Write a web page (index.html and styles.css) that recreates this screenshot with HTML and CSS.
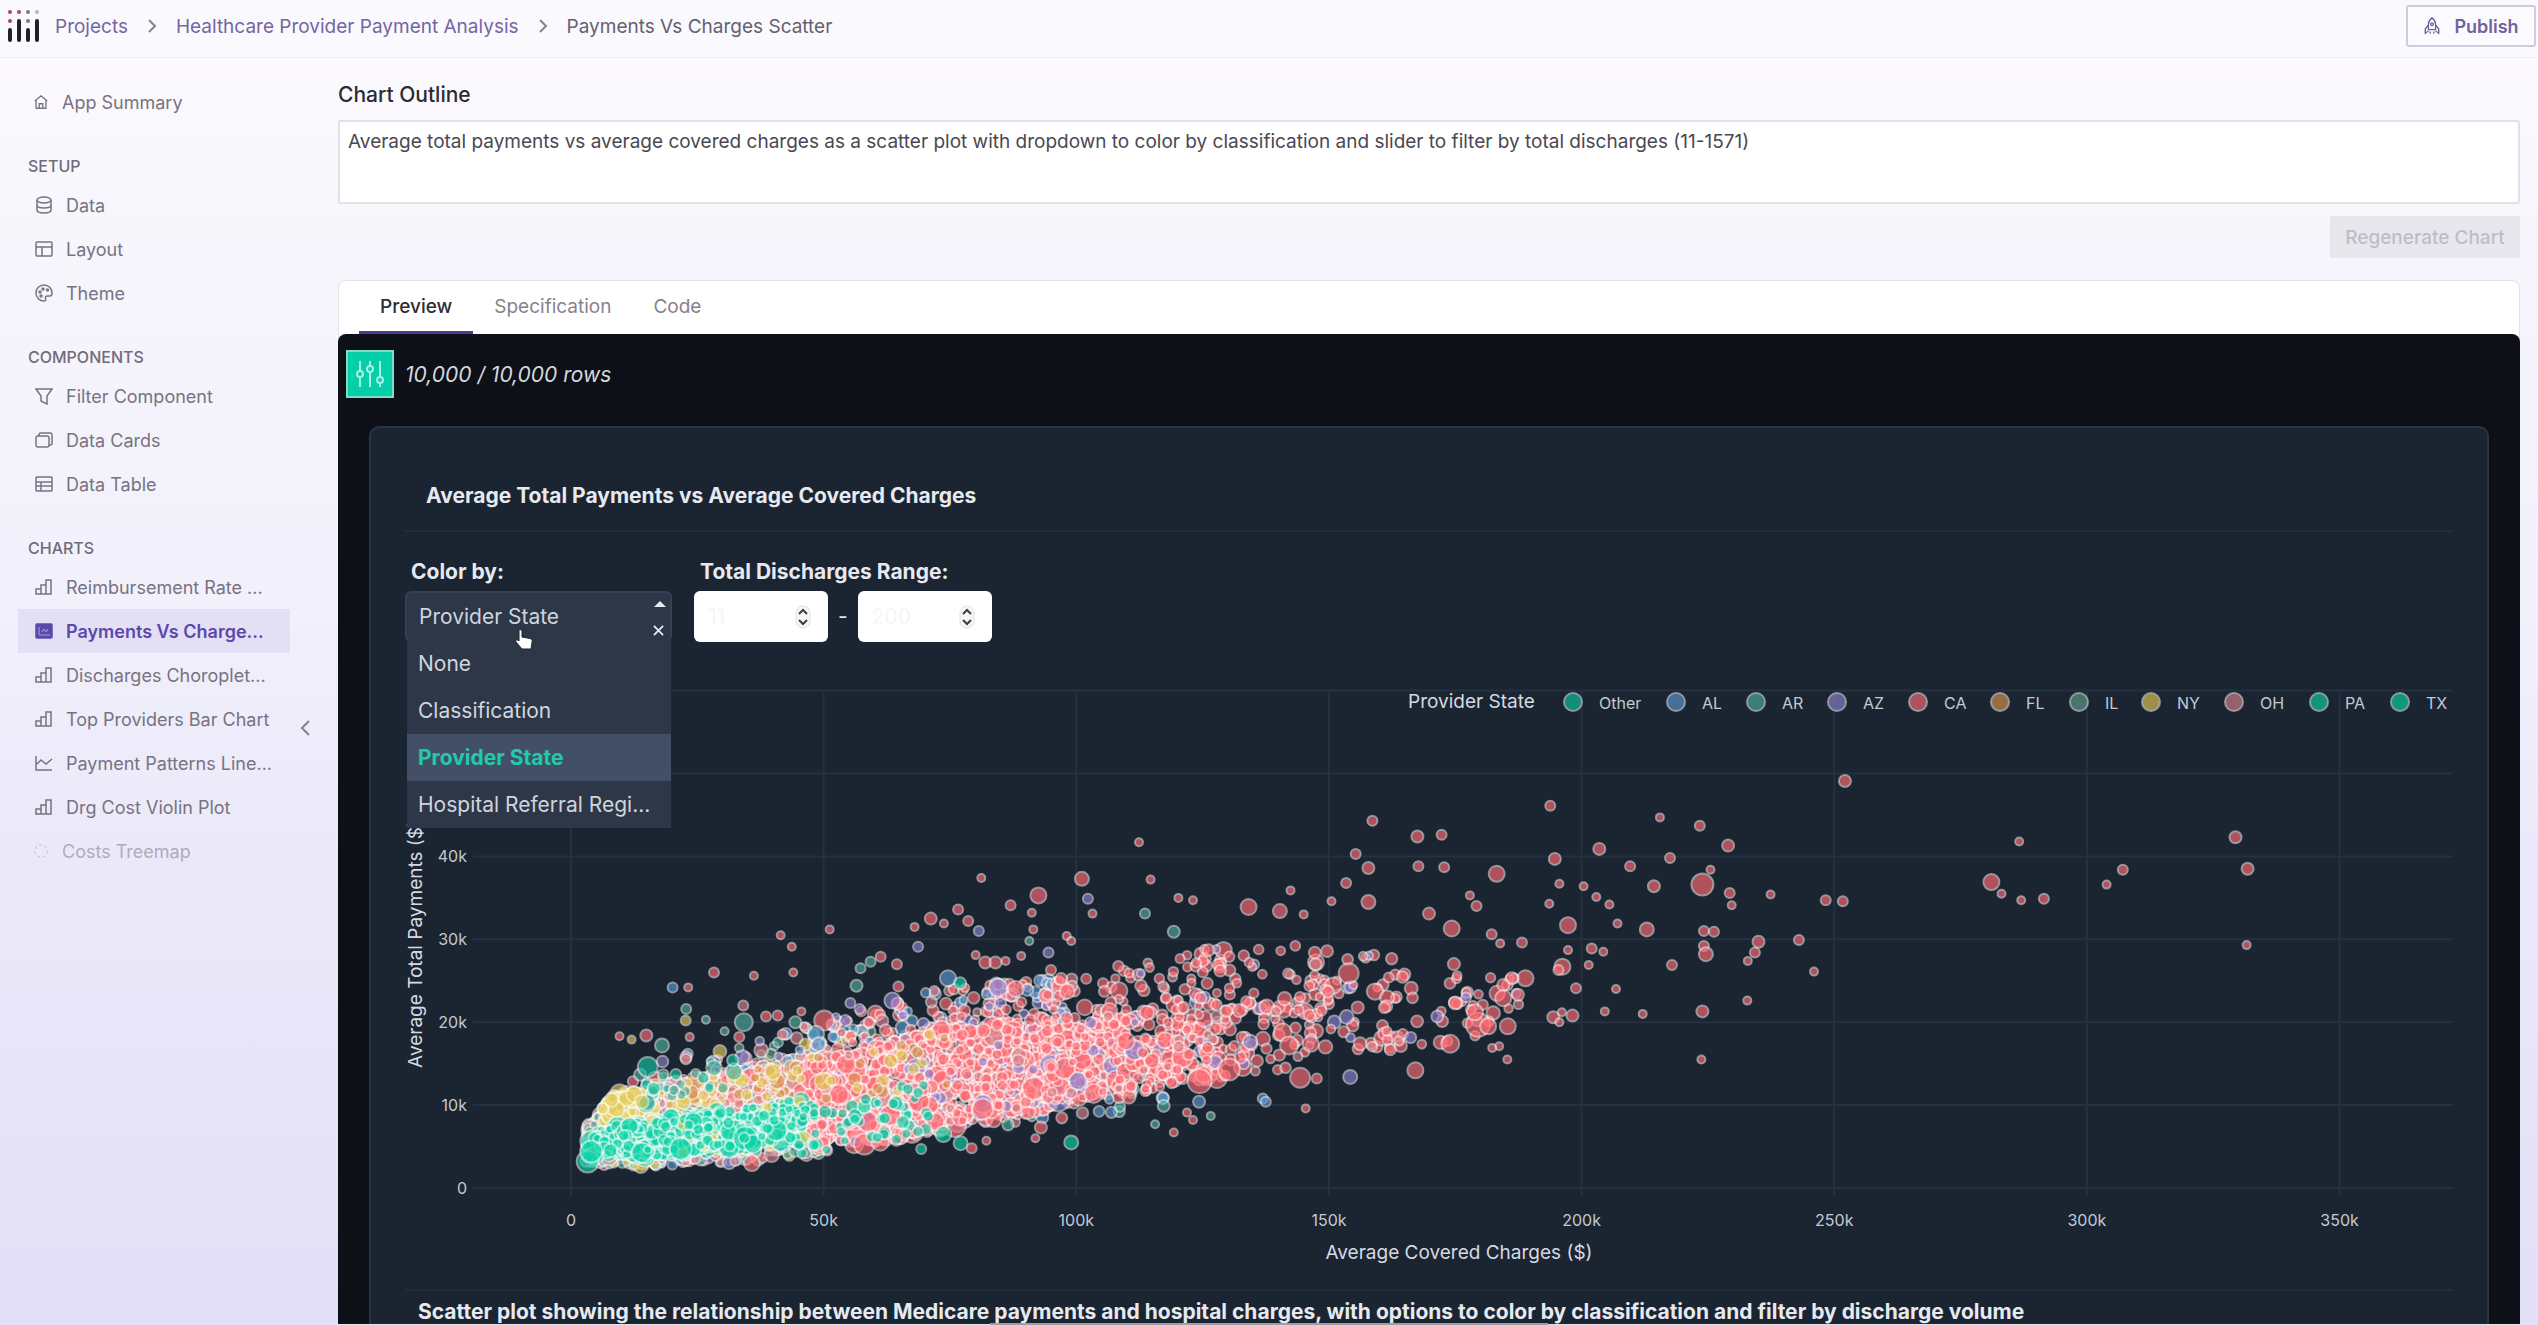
FILE: index.html
```html
<!DOCTYPE html>
<html lang="en">
<head>
    <meta charset="UTF-8">
    <meta name="viewport" content="width=device-width, initial-scale=1.0">
    <title>Payments Vs Charges Scatter</title>
    <link rel="stylesheet" href="styles.css">
</head>
<body>
    <header class="topbar">
        <svg class="logo" viewBox="0 0 34 34" aria-hidden="true">
            <g fill="#22202b">
                <rect x="1" y="19" width="4" height="14" rx="2"/>
                <rect x="10" y="10" width="4" height="23" rx="2"/>
                <rect x="19" y="19" width="4" height="14" rx="2"/>
                <rect x="28" y="10" width="4" height="23" rx="2"/>
            </g>
            <g fill="#a8456b">
                <circle cx="3" cy="3" r="2"/>
                <circle cx="3" cy="12" r="2"/>
                <circle cx="12" cy="3" r="2"/>
            </g>
            <circle cx="21" cy="3" r="2" fill="#8d6f88"/>
            <circle cx="21" cy="12" r="2" fill="#8d6f88"/>
            <circle cx="30" cy="3" r="2" fill="#9cc4cc"/>
        </svg>
        <nav class="breadcrumb">
            <a href="#">Projects</a>
            <svg class="sep" viewBox="0 0 10 14"><path d="M2 1l6 6-6 6"/></svg>
            <a href="#">Healthcare Provider Payment Analysis</a>
            <svg class="sep" viewBox="0 0 10 14"><path d="M2 1l6 6-6 6"/></svg>
            <span>Payments Vs Charges Scatter</span>
        </nav>
        <button class="publish" type="button">
            <svg class="icon" viewBox="0 0 18 20"><path d="M5 14V8c0-3 2-5.500 4-7 2 1.500 4 4 4 7v6zM5 9l-3.500 4v5L5 15.500M13 9l3.500 4v5L13 15.500M7 16v2.500M11 16v2.500"/><circle cx="9" cy="8" r="1.500"/></svg>
            Publish
        </button>
    </header>

    <div class="layout">
        <aside class="sidebar">
            <a href="#" class="item home"><svg class="icon" viewBox="0 0 18 18"><path d="M2 8l7-6 7 6M3.500 7v9h11V7M7 16v-5h4v5"/></svg><span>App Summary</span></a>
            <h2>SETUP</h2>
            <a href="#" class="item"><svg class="icon" viewBox="0 0 18 18"><ellipse cx="9" cy="4" rx="7" ry="3"/><path d="M2 4v10c0 1.700 3 3 7 3s7-1.300 7-3V4M2 9c0 1.700 3 3 7 3s7-1.300 7-3"/></svg><span>Data</span></a>
            <a href="#" class="item"><svg class="icon" viewBox="0 0 18 18"><rect x="1" y="2" width="16" height="14" rx="1"/><path d="M1 7h16M7 7v9"/></svg><span>Layout</span></a>
            <a href="#" class="item"><svg class="icon" viewBox="0 0 18 18"><path d="M9 1a8 8 0 1 0 0 16c2 0 2-1 1.500-2.500-.5-1.700.5-2.500 2-2.500H15c1.500 0 2-1.500 2-3a8 8 0 0 0-8-8z"/><circle cx="5" cy="8" r="1"/><circle cx="8" cy="5" r="1"/><circle cx="12.500" cy="6" r="1"/><circle cx="6" cy="12" r="1"/></svg><span>Theme</span></a>
            <h2>COMPONENTS</h2>
            <a href="#" class="item"><svg class="icon" viewBox="0 0 18 18"><path d="M1 2h16l-5 7v8l-6-3V9z"/></svg><span>Filter Component</span></a>
            <a href="#" class="item"><svg class="icon" viewBox="0 0 18 18"><rect x="1" y="5" width="13" height="11" rx="2"/><path d="M3 5l2-3h10a2 2 0 0 1 2 2v9l-3 2"/></svg><span>Data Cards</span></a>
            <a href="#" class="item"><svg class="icon" viewBox="0 0 18 18"><rect x="1" y="2" width="16" height="14" rx="1"/><path d="M1 7h16M1 11h16M6 7v9"/></svg><span>Data Table</span></a>
            <h2>CHARTS</h2>
            <a href="#" class="item"><svg class="icon" viewBox="0 0 18 18"><path d="M1 16v-5h5v5zM6 16V7h5v9M11 16V2h5v14zH6"/></svg><span>Reimbursement Rate ...</span></a>
            <a href="#" class="item active"><svg class="icon" viewBox="0 0 18 18"><rect x="1" y="2" width="16" height="14" rx="1" fill="currentColor"/><path d="M4 5v8h11M7 10l2-3 2 3 2-3" stroke="#a99fe0" stroke-width="1"/></svg><span>Payments Vs Charge...</span></a>
            <a href="#" class="item"><svg class="icon" viewBox="0 0 18 18"><path d="M1 16v-5h5v5zM6 16V7h5v9M11 16V2h5v14zH6"/></svg><span>Discharges Choroplet...</span></a>
            <a href="#" class="item"><svg class="icon" viewBox="0 0 18 18"><path d="M1 16v-5h5v5zM6 16V7h5v9M11 16V2h5v14zH6"/></svg><span>Top Providers Bar Chart</span></a>
            <a href="#" class="item"><svg class="icon" viewBox="0 0 18 18"><path d="M1 2v14h16M2 10l4-4 5 4 6-5"/></svg><span>Payment Patterns Line...</span></a>
            <a href="#" class="item"><svg class="icon" viewBox="0 0 18 18"><path d="M1 16v-5h5v5zM6 16V7h5v9M11 16V2h5v14zH6"/></svg><span>Drg Cost Violin Plot</span></a>
            <a href="#" class="item pending"><svg class="icon" viewBox="0 0 18 18"><circle cx="9" cy="9" r="7" stroke-dasharray="3 3"/></svg><span>Costs Treemap</span></a>
            <button class="collapse" type="button" aria-label="Collapse sidebar"><svg viewBox="0 0 10 16"><path d="M9 1L2 8l7 7"/></svg></button>
        </aside>

        <main class="main">
            <label class="outline-label" for="outline">Chart Outline</label>
            <textarea class="outline" id="outline">Average total payments vs average covered charges as a scatter plot with dropdown to color by classification and slider to filter by total discharges (11-1571)</textarea>
            <button class="regenerate" type="button" disabled>Regenerate Chart</button>

            <section class="panel">
                <div class="tabs">
                    <button class="tab active" type="button">Preview</button>
                    <button class="tab" type="button">Specification</button>
                    <button class="tab" type="button">Code</button>
                </div>
                <div class="preview">
                    <div class="rows">
                        <button class="filters" type="button" aria-label="Filters">
                            <svg viewBox="0 0 30 30"><path d="M5 2v10M5 18v10M15 2v5M15 13v15M25 2v16M25 24v4"/><circle cx="5" cy="15" r="3"/><circle cx="15" cy="10" r="3"/><circle cx="25" cy="21" r="3"/></svg>
                        </button>
                        <em>10,000 / 10,000 rows</em>
                    </div>
                    <div class="card">
                        <h1>Average Total Payments vs Average Covered Charges</h1>
                        <div class="controls">
                            <div class="field">
                                <label for="color-by">Color by:</label>
                                <div class="dropdown">
                                    <select id="color-by">
                                        <option>None</option>
                                        <option>Classification</option>
                                        <option selected>Provider State</option>
                                        <option>Hospital Referral Region</option>
                                    </select>
                                    <span class="caret"></span>
                                    <button class="clear" type="button" aria-label="Clear"><svg viewBox="0 0 12 12"><path d="M1 1l10 10M11 1L1 11"/></svg></button>
                                    <ul class="menu">
                                        <li>None</li>
                                        <li>Classification</li>
                                        <li class="selected">Provider State</li>
                                        <li>Hospital Referral Regi...</li>
                                    </ul>
                                    <svg class="pointer" viewBox="0 0 20 22"><path d="M5 2c1-1 3 0 3 1.500V9l8 1.500c2 .5 2.500 1.500 2 4L17 21H8l-6-7c-1-1.500 1-3 2.500-1.500L5 13z"/></svg>
                                </div>
                            </div>
                            <div class="field">
                                <label for="range-min">Total Discharges Range:</label>
                                <div class="range">
                                    <div class="number">
                                        <input id="range-min" type="number" value="11">
                                        <svg viewBox="0 0 16 24"><rect x="1" y="1" width="14" height="22" rx="7"/><path d="M4 9l4-4 4 4M4 15l4 4 4-4"/></svg>
                                    </div>
                                    <span>-</span>
                                    <div class="number">
                                        <input type="number" value="200" aria-label="Maximum discharges">
                                        <svg viewBox="0 0 16 24"><rect x="1" y="1" width="14" height="22" rx="7"/><path d="M4 9l4-4 4 4M4 15l4 4 4-4"/></svg>
                                    </div>
                                </div>
                            </div>
                        </div>
                        <svg class="plot" id="plot" viewBox="0 0 2048 620"></svg>
                        <p class="caption">Scatter plot showing the relationship between Medicare payments and hospital charges, with options to color by classification and filter by discharge volume</p>
                    </div>
                </div>
            </section>
        </main>
    </div>
    <div class="scroll-hint"></div>
    <script src="script.js"></script>
</body>
</html>
```
FILE: styles.css
```css
* {
    box-sizing: border-box;
}
body {
    margin: 0;
    height: 100vh;
    overflow: hidden;
    display: flex;
    flex-direction: column;
    font-family: Inter, "Liberation Sans", sans-serif;
    font-size: 18px;
    color: #6f6b7b;
    background: linear-gradient(#fdfbff 0%, #f6f5fb 20%, #f3f2fc 40%, #ebe9f9 65%, #e3dff7 100%);
}
button, select, input, textarea {
    font-family: inherit;
    margin: 0;
}
button {
    cursor: pointer;
}
svg {
    display: block;
    fill: none;
    stroke: currentColor;
}
.icon {
    width: 18px;
    height: 18px;
    stroke-width: 1.5;
    flex: none;
}

/* Top bar */
.topbar {
    height: 58px;
    flex: none;
    display: flex;
    align-items: center;
    padding: 0 2px 5px 7px;
    background: #faf9fd;
    border-bottom: 1px solid #f0eff6;
}
.logo {
    width: 34px;
    height: 34px;
    stroke: none;
}
.breadcrumb {
    flex: 1;
    display: flex;
    align-items: center;
    gap: 19px;
    margin-left: 14px;
    font-size: 19px;
    color: #65616f;
}
.breadcrumb a {
    color: #7565a3;
    text-decoration: none;
}
.sep {
    width: 10px;
    height: 14px;
    stroke: #85818f;
    stroke-width: 2;
}
.publish {
    height: 42px;
    width: 130px;
    display: flex;
    align-items: center;
    justify-content: center;
    gap: 13px;
    border: 2px solid #cfcbdc;
    border-radius: 3px;
    background: #fbfafe;
    color: #73619f;
    font-size: 18px;
    font-weight: 600;
}

/* Sidebar */
.layout {
    flex: 1;
    min-height: 0;
    display: flex;
}
.sidebar {
    position: relative;
    width: 338px;
    flex: none;
    padding: 22px 48px 0 18px;
}
.sidebar h2 {
    margin: 30px 0 5px 10px;
    font-size: 16px;
    line-height: 24px;
    font-weight: 500;
}
.item {
    height: 44px;
    display: flex;
    align-items: center;
    gap: 13px;
    padding-left: 17px;
    color: #777382;
    text-decoration: none;
    white-space: nowrap;
}
.item.home,
.item.pending {
    padding-left: 15px;
}
.item.home .icon,
.item.pending .icon {
    width: 16px;
    height: 16px;
}
.item.active {
    background: #e3dff5;
    color: #5b48ab;
    font-weight: 600;
}
.item.pending {
    color: #b0abbd;
}
.item.pending .icon {
    color: #d3c3e0;
}
.collapse {
    position: absolute;
    right: 23px;
    top: 660px;
    padding: 2px 5px;
    border: none;
    background: none;
    color: #85818f;
}
.collapse svg {
    width: 10px;
    height: 16px;
    stroke-width: 2;
}

/* Main column */
.main {
    flex: 1;
    min-width: 0;
    display: flex;
    flex-direction: column;
    padding: 23px 18px 0 0;
}
.outline-label {
    margin-bottom: 11px;
    font-size: 21px;
    line-height: 28px;
    font-weight: 500;
    color: #2c2a33;
}
.outline {
    height: 84px;
    padding: 8px;
    border: 2px solid #e2e1e6;
    border-radius: 3px;
    background: #fff;
    color: #4a4852;
    font-size: 19px;
    line-height: 24px;
    resize: none;
}
.regenerate {
    align-self: flex-end;
    height: 42px;
    width: 190px;
    margin: 12px 0 22px;
    padding: 0;
    border: none;
    background: #e9e7ee;
    color: #bfbcc8;
    font-size: 19px;
    font-weight: 500;
}
.panel {
    flex: 1;
    min-height: 0;
    display: flex;
    flex-direction: column;
    border: 1px solid #e3e2e8;
    border-radius: 8px 8px 0 0;
    background: #fff;
}
.tabs {
    flex: none;
    height: 53px;
    display: flex;
    padding-left: 20px;
}
.tab {
    padding: 0 21px;
    border: none;
    border-bottom: 3px solid transparent;
    background: none;
    color: #85838a;
    font-size: 19px;
}
.tab.active {
    border-color: #4b3c8f;
    color: #2f2d36;
    font-weight: 500;
}
.preview {
    flex: 1;
    min-height: 0;
    overflow: hidden;
    margin: 0 -1px;
    border-radius: 8px 8px 0 0;
    background: #0e1017;
}
.rows {
    display: flex;
    align-items: center;
    gap: 11px;
    padding: 16px 8px 28px;
    color: #d5d8de;
    font-size: 21px;
}
.filters {
    width: 48px;
    height: 48px;
    display: flex;
    align-items: center;
    justify-content: center;
    padding: 0;
    border: 2px solid #7edcc8;
    background: #05cfa8;
    color: #a5f3e3;
}
.filters svg {
    width: 30px;
    height: 30px;
    stroke-width: 2;
}

/* Chart card */
.card {
    margin: 0 31px;
    padding: 54px 34px 40px;
    border: 2px solid #2a3543;
    border-radius: 10px;
    background: #1b2431;
    color: #e6eaf0;
}
.card h1 {
    margin: 0;
    padding: 0 21px 20px;
    border-bottom: 2px solid #232d3a;
    font-size: 21px;
    line-height: 28px;
    font-weight: 700;
}
.controls {
    display: flex;
    gap: 22px;
    margin: 26px 0 18px;
}
.field {
    display: flex;
    flex-direction: column;
    gap: 5px;
}
.field label {
    padding-left: 6px;
    font-size: 21px;
    line-height: 28px;
    font-weight: 700;
}
.dropdown {
    position: relative;
    width: 267px;
    height: 51px;
}
.dropdown select {
    width: 100%;
    height: 100%;
    padding: 0 12px;
    border: 2px solid #354052;
    border-radius: 6px;
    background: #2d3748;
    color: #cfd5de;
    font-size: 21px;
    appearance: none;
}
.caret {
    position: absolute;
    right: 6px;
    top: 10px;
    border: 6px solid transparent;
    border-top: none;
    border-bottom-color: #e6eaf0;
}
.clear {
    position: absolute;
    z-index: 3;
    right: 6px;
    top: 32px;
    padding: 2px;
    border: none;
    background: none;
    color: #e6eaf0;
}
.clear svg {
    width: 11px;
    height: 11px;
    stroke-width: 2;
}
.menu {
    position: absolute;
    z-index: 2;
    top: 49px;
    left: 2px;
    right: 1px;
    margin: 0;
    padding: 0;
    list-style: none;
    background: #2d3748;
    color: #cfd5de;
    font-size: 21px;
    line-height: 47px;
}
.menu li {
    padding: 0 11px;
}
.menu .selected {
    background: #434f66;
    color: #1fcbaa;
    font-weight: 700;
}
.pointer {
    position: absolute;
    z-index: 4;
    left: 108px;
    top: 37px;
    width: 22px;
    height: 22px;
    fill: #fff;
    stroke: #1b2431;
}
.range {
    display: flex;
    align-items: center;
    gap: 10px;
    font-size: 21px;
}
.number {
    position: relative;
}
.number input {
    width: 134px;
    height: 51px;
    padding: 0 14px;
    border: none;
    border-radius: 6px;
    background: #fff;
    color: #f6f6f7;
    font-size: 21px;
    appearance: textfield;
}
.number input::-webkit-inner-spin-button {
    display: none;
}
.number svg {
    position: absolute;
    right: 17px;
    top: 14px;
    width: 16px;
    height: 24px;
    fill: #f6f6f6;
    stroke: #e2e2e2;
}
.number path {
    fill: none;
    stroke: #3b3f46;
    stroke-width: 2;
}
.plot {
    width: 100%;
    height: auto;
    stroke: none;
}
.plot text {
    fill: #c3cad4;
    font-size: 16px;
}
.plot .title {
    font-size: 19px;
    fill: #d5dae2;
}
.plot .grid {
    stroke: #253040;
    stroke-width: 2;
}
.plot .marker {
    opacity: 0.65;
    stroke: #fff;
    stroke-opacity: 0.75;
    stroke-width: 2;
}
.caption {
    margin: 9px 0 0;
    padding: 7px 13px 0;
    border-top: 2px solid #232d3a;
    font-size: 21px;
    line-height: 28px;
    font-weight: 700;
}
.scroll-hint {
    position: fixed;
    bottom: 0;
    left: 39%;
    width: 22%;
    height: 2px;
    background: #9ba0a8;
}
```
FILE: script.js
```js
const plot = document.getElementById('plot');
const colors = {
    Other: '#12c2a0', AL: '#5b97cf', AR: '#4fae9c', AZ: '#8c80cf', CA: '#ff6b72', FL: '#d99450',
    IL: '#5fa08e', NY: '#e3cb55', OH: '#d98289', PA: '#0fcfa3', TX: '#0bd3a6'
};

function add(name, attrs, text) {
    const el = document.createElementNS('http://www.w3.org/2000/svg', name);
    for (const key in attrs) el.setAttribute(key, attrs[key]);
    if (text) el.textContent = text;
    plot.appendChild(el);
}

// values are in thousands of dollars
const px = v => 166 + v * 5.053;
const py = v => 528 - v * 8.29;

// grid and ticks
for (let v = 0; v <= 350; v += 50) {
    add('line', { class: 'grid', x1: px(v), x2: px(v), y1: 31, y2: 536 });
    add('text', { x: px(v), y: 566, 'text-anchor': 'middle' }, v ? v + 'k' : '0');
}
for (let v = 0; v <= 60; v += 10) {
    add('line', { class: 'grid', x1: 68, x2: 2048, y1: py(v), y2: py(v) });
    if (v <= 40) add('text', { x: 62, y: py(v) + 6, 'text-anchor': 'end' }, v ? v + 'k' : '0');
}
add('text', { class: 'title', x: 1054, y: 599, 'text-anchor': 'middle' }, 'Average Covered Charges ($)');
add('text', { class: 'title', transform: 'translate(17 284) rotate(-90)', 'text-anchor': 'middle' }, 'Average Total Payments ($)');

// seeded so that the cloud is the same on every load
let seed = 7;
function rand() {
    seed = (seed * 16807) % 2147483647;
    return seed / 2147483647;
}

function lerp(table, x) {
    for (let i = 1; i < table.length; i++) {
        if (x <= table[i][0]) {
            const [x0, y0] = table[i - 1];
            const [x1, y1] = table[i];
            return y0 + (y1 - y0) * (x - x0) / (x1 - x0);
        }
    }
    return table[table.length - 1][1];
}

const low = [[2, 3.4], [6, 2.7], [20, 2.7], [35, 3.2], [50, 4.2], [65, 5.5], [80, 7.5], [95, 9], [110, 10], [120, 12], [140, 13], [160, 15], [190, 19]];
const high = [[2, 5], [4, 9], [8, 12], [15, 13], [20, 14.5], [35, 16], [50, 18.5], [60, 20], [70, 22], [85, 23], [100, 24], [120, 27], [145, 29], [190, 28]];

function dot(x, y, r, color) {
    add('circle', { class: 'marker', cx: px(x).toFixed(1), cy: py(y).toFixed(1), r, fill: colors[color] });
}

function radius(big) {
    const t = rand();
    return (4 + 2 * rand() + (t > 0.8 ? big * rand() : 0)).toFixed(1);
}

function cloud(n, x0, x1, t0, t1, big, pick) {
    for (let i = 0; i < n; i++) {
        const x = x0 + (x1 - x0) * rand();
        const t = t0 + (t1 - t0) * rand();
        const y = lerp(low, x) + (lerp(high, x) - lerp(low, x)) * t;
        dot(x, y, radius(big), pick[Math.floor(rand() * pick.length)]);
    }
}

const mixed = ['OH', 'AZ', 'AL', 'AR', 'IL', 'OH', 'CA', 'NY'];
const mostlyRed = ['CA', 'CA', 'CA', 'CA', 'CA', 'CA', 'CA', 'CA', 'CA', 'OH', 'CA', 'AZ'];
cloud(900, 3, 50, 0, 0.88, 3, mixed);
cloud(90, 12, 60, 0.75, 1.12, 3, mixed);
cloud(170, 48, 100, 0.75, 1.12, 2, ['OH', 'AZ', 'CA', 'AL', 'CA', 'CA']);
cloud(50, 85, 122, -0.05, 0.3, 2, ['AL', 'AR', 'CA', 'OH']);
cloud(220, 24, 50, 0.3, 0.85, 4, ['CA', 'CA', 'OH', 'FL']);
cloud(1300, 47, 96, 0.02, 0.8, 6, mostlyRed);
cloud(260, 94, 110, 0.1, 0.7, 6, mostlyRed);
cloud(110, 94, 130, 0.5, 1.1, 3, mostlyRed);
cloud(150, 108, 128, 0.05, 0.5, 6, mostlyRed);
cloud(80, 118, 150, 0.05, 0.6, 4, mostlyRed);
cloud(70, 118, 150, 0.5, 1.05, 3, mostlyRed);
cloud(55, 146, 165, 0.1, 1, 3, mostlyRed);
cloud(45, 160, 188, 0.05, 0.9, 2, mostlyRed);
cloud(60, 10, 50, 0.55, 0.85, 4, ['NY', 'NY', 'FL']);
cloud(25, 50, 75, 0.3, 0.8, 3, ['NY', 'FL']);
cloud(110, 6, 17, 0.62, 0.92, 5, ['NY']);
cloud(240, 3, 28, 0.1, 0.52, 5, ['TX', 'PA']);
cloud(520, 10, 46, 0.12, 0.5, 5, ['TX', 'PA', 'TX', 'PA', 'TX', 'TX', 'TX', 'NY']);
cloud(60, 45, 72, 0, 0.45, 3, ['TX', 'Other']);
cloud(25, 14, 34, 0.7, 1, 4, ['Other', 'AR']);
cloud(45, 5, 44, 0.15, 0.45, 12, ['TX']);

// outliers: charges, payments, radius, state (California when left out)
const outliers = [
    [252.1, 49.1, 6], [286.6, 41.8, 4], [281.1, 36.9, 8], [283.1, 35.5, 4], [287, 34.7, 4], [291.5, 34.9, 5],
    [303.9, 36.6, 4], [307.1, 38.4, 5], [329.4, 42.3, 6], [331.8, 38.5, 6], [331.6, 29.3, 4], [248.3, 34.7, 5],
    [251.7, 34.6, 5], [243, 29.9, 5], [246, 26.1, 4], [112.4, 41.7, 4], [114.7, 37.2, 4], [101.1, 37.3, 7],
    [102.3, 34.9, 5, 'AZ'], [103.2, 33.1, 4], [120.2, 35, 4], [123.1, 34.7, 4], [113.6, 33.1, 5, 'AR'],
    [119.3, 30.9, 6, 'AR'], [134.1, 33.9, 8], [140.3, 33.4, 7], [145, 33, 4], [142.4, 35.9, 4], [158.6, 44.3, 5],
    [167.5, 42.4, 6], [172.3, 42.6, 5], [155.3, 40.3, 5], [157.8, 38.6, 6], [153.4, 36.8, 5], [150.5, 34.6, 4],
    [157.8, 34.5, 7], [167.7, 38.8, 5], [172.8, 38.7, 5], [183.2, 37.9, 8], [177.9, 35.3, 4], [179.2, 34, 5],
    [169.8, 33.1, 6], [193.8, 46.1, 5], [215.5, 44.7, 4], [223.4, 43.7, 5], [229, 41.3, 6], [203.5, 40.9, 6],
    [194.7, 39.7, 6], [217.5, 39.8, 5], [209.6, 38.8, 5], [225.5, 38.4, 4], [223.9, 36.6, 11], [214.3, 36.4, 6],
    [195.6, 36.7, 4], [200.4, 36.4, 4], [202.9, 35.1, 4], [205.5, 34.2, 4], [193.6, 34.3, 4], [229.3, 35.6, 5],
    [229.7, 34.1, 4], [237.4, 35.4, 4], [197.3, 31.7, 8], [207.1, 31.9, 4], [212.9, 31.2, 7], [224.2, 31, 5],
    [226.2, 30.9, 5], [235, 29.7, 6], [234.3, 28.4, 5], [232.9, 27.4, 4], [224.2, 29.2, 5], [224.6, 28.2, 7],
    [217.9, 26.9, 5], [197.3, 28.7, 4], [202, 28.9, 5], [204.3, 28.5, 4], [201.4, 26.9, 4], [196.2, 26.7, 8],
    [195.4, 26.3, 5], [198.9, 24.1, 5], [206.8, 24, 4], [232.8, 22.6, 4], [223.9, 21.3, 6], [223.7, 15.5, 4],
    [212.1, 21, 4], [204.6, 21.3, 4], [194.4, 20.6, 6], [196.1, 21.2, 4], [198.2, 20.8, 6], [195.6, 20, 4],
    [188.9, 25.3, 8], [186.2, 25.3, 6], [184.5, 24.5, 6], [184.5, 22.9, 8], [187.4, 23.3, 6], [188.2, 29.6, 5],
    [182.2, 30.6, 5], [183.9, 29.5, 4], [174.3, 31.3, 8], [179.5, 19.7, 12], [181.5, 19.5, 8], [178.9, 21.2, 8],
    [185.4, 19.5, 8], [174, 17.4, 9], [167.1, 14.2, 8], [185.3, 15.5, 4], [183.7, 17.1, 4], [182.3, 16.9, 4],
    [153.9, 25.9, 10], [144.3, 13.3, 10], [147.6, 13.2, 5], [124.4, 12.9, 12], [130.2, 14.3, 11], [142.1, 17.2, 9],
    [146.4, 17.4, 8], [154.2, 13.4, 7, 'AZ'], [136.9, 10.8, 5, 'AL'], [137.5, 10.4, 5, 'AL'], [145.4, 9.6, 4],
    [119.3, 6.7, 4], [115.6, 7.7, 4, 'AR'], [126.6, 8.7, 4, 'AR'], [123.1, 8.2, 4], [121.9, 9.1, 4],
    [117.3, 9.9, 6, 'AR'], [124.3, 10.4, 6, 'AL'], [41.5, 30.5, 4], [43.7, 29.1, 4], [44, 26, 4], [36.2, 25.6, 4],
    [28.3, 26, 5], [20.1, 24.2, 5, 'AL'], [23.2, 24.2, 4], [51.2, 31.2, 4], [81.2, 37.4, 4], [92.5, 35.3, 8],
    [87, 34.1, 5], [76.6, 33.6, 5], [71.2, 32.5, 6], [73.8, 31.9, 4], [78.6, 32.2, 5], [91.2, 33.2, 4],
    [91.5, 31.2, 4], [68, 31.5, 4], [80.7, 31, 5, 'AZ'], [68.7, 29.1, 5, 'AZ'], [90.7, 29.8, 4, 'AR'],
    [98.1, 30.4, 4], [99, 29.8, 4], [61.3, 27.9, 5], [59.3, 27.3, 5, 'AR'], [57.3, 26.5, 5, 'AR'], [64.5, 27, 5],
    [56.5, 24.4, 6, 'AR'], [64.8, 24.3, 5], [80.1, 28.1, 4], [82, 27.2, 6], [84, 27.2, 6], [86, 27.4, 4],
    [89.1, 28, 4], [94.5, 28.4, 5, 'AZ'], [95, 26.3, 5], [97, 25.2, 6], [74.6, 25.3, 8, 'AL'], [77, 24.7, 6, 'TX'],
    [63.6, 22.6, 8, 'AZ'], [84.5, 24.2, 9, 'AZ'], [88, 24, 8], [50.1, 20.2, 10], [34.2, 20, 9, 'AR'], [14.9, 18.4, 6],
    [9.6, 18.3, 4], [12, 17.9, 4, 'NY'], [18, 17.2, 7, 'AR'], [22.8, 21.6, 5, 'AR'], [22.7, 20.2, 5, 'NY'],
    [26.7, 20.3, 4, 'AR'], [23.5, 18.2, 4], [30.4, 18.9, 4, 'AR'], [34.1, 22, 5, 'OH'], [38.6, 20.7, 5],
    [40.9, 20.8, 5], [45.6, 21.3, 4], [44.4, 20, 6, 'AR'], [41.9, 18.5, 5], [33.3, 18.2, 5], [15.2, 14.6, 10, 'Other'],
    [55.3, 22.3, 5, 'AZ'], [57.1, 21.6, 5, 'AZ'], [48.5, 18.6, 8, 'AL'], [49, 17.3, 7, 'AL'], [3.3, 3.2, 11, 'TX'],
    [4, 4.4, 11, 'TX'], [99, 5.5, 7, 'TX'], [77.1, 5.4, 7, 'TX'], [69.3, 4.7, 5, 'TX'], [73.7, 6.5, 8, 'TX'],
    [79.3, 4.8, 5], [82.2, 5.7, 4], [35.8, 3, 8], [91.9, 6, 4], [93, 7.3, 6], [11, 10.8, 8, 'NY'], [9, 9.5, 8, 'NY'],
    [12.5, 11.3, 8, 'NY'], [8, 10.6, 7, 'NY'], [14, 10.4, 7, 'NY'], [65.5, 16, 6, 'NY'], [40, 14, 8, 'NY']
];
outliers.forEach(([x, y, r, state]) => dot(x, y, r, state || 'CA'));

// legend
const legend = [
    ['Other', 1168], ['AL', 1271], ['AR', 1351], ['AZ', 1432], ['CA', 1513], ['FL', 1595],
    ['IL', 1674], ['NY', 1746], ['OH', 1829], ['PA', 1914], ['TX', 1995]
];
add('text', { class: 'title', x: 1003, y: 48 }, 'Provider State');
legend.forEach(([name, x]) => {
    add('circle', { class: 'marker', cx: x, cy: 42, r: 9, fill: colors[name] });
    add('text', { x: x + 26, y: 49 }, name);
});
```
